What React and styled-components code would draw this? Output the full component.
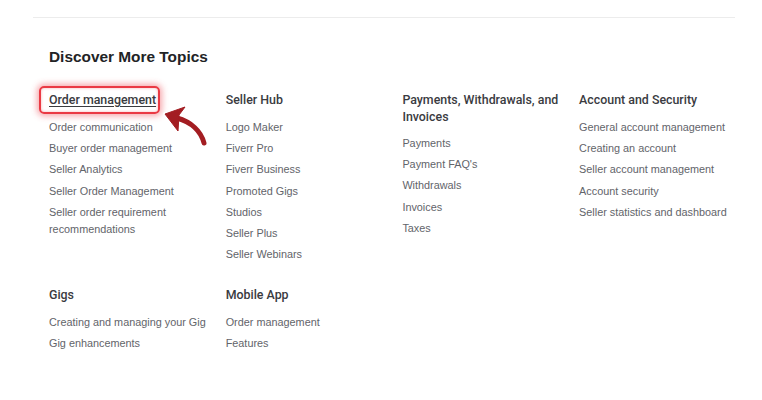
import React from "react";
import styled, { createGlobalStyle } from "styled-components";

const Global = createGlobalStyle`
  html, body { margin: 0; padding: 0; background: #fff; }
  body { font-family: "Liberation Sans", Arial, sans-serif; }
`;

const Page = styled.div`
  position: relative;
  width: 762px;
  height: 400px;
  padding: 17px 27px 0 33px;
  box-sizing: border-box;
`;

const Divider = styled.hr`
  margin: 0;
  border: 0;
  border-top: 1px solid #ececec;
`;

const Content = styled.div`
  padding-left: 16px;
`;

const Title = styled.h2`
  margin: 29px 0 0;
  font-size: 15.4px;
  line-height: 20px;
  font-weight: 700;
  color: #222325;
`;

const Grid = styled.div`
  display: grid;
  grid-template-columns: repeat(4, 176.7px);
  row-gap: 23px;
  margin-top: 23.5px;
  align-items: start;
`;

const Column = styled.div`
  display: flex;
  flex-direction: column;
  gap: ${(p) => (p.$tight ? "10.5px" : "11.5px")};
`;

const Heading = styled.div`
  font-family: Roboto, "Liberation Sans", sans-serif;
  font-size: 12.4px;
  line-height: 17px;
  font-weight: 500;
  color: #3a3b3f;
  width: ${(p) => (p.$wrap ? "165px" : "auto")};
`;

const HeadingText = styled.span`
  position: relative;
  display: inline-block;
  text-decoration: ${(p) => (p.$underline ? "underline" : "none")};
  text-decoration-thickness: 1px;
  text-underline-offset: 2px;
`;

const Highlight = styled.span`
  position: absolute;
  left: -10px;
  right: -4px;
  top: -4.5px;
  bottom: -6.5px;
  border: 2px solid #ea3a44;
  border-radius: 5px;
  box-shadow: 0 0 6px 2px rgba(234, 58, 68, 0.45), inset 0 0 3px rgba(234, 58, 68, 0.4);
  pointer-events: none;
`;

const LinkList = styled.ul`
  list-style: none;
  margin: 0;
  padding: 0;
  display: flex;
  flex-direction: column;
  gap: 4px;
`;

const LinkItem = styled.li`
  font-size: 10.85px;
  line-height: 17.2px;
  color: #62646a;
  width: ${(p) => (p.$narrow ? "130px" : "auto")};
`;

const ArrowSvg = styled.svg`
  position: absolute;
  left: 157px;
  top: 103px;
  width: 56px;
  height: 50px;
  overflow: visible;
`;

const sections = [
  {
    title: "Order management",
    highlight: true,
    links: [
      "Order communication",
      "Buyer order management",
      "Seller Analytics",
      "Seller Order Management",
      "Seller order requirement recommendations",
    ],
  },
  {
    title: "Seller Hub",
    links: [
      "Logo Maker",
      "Fiverr Pro",
      "Fiverr Business",
      "Promoted Gigs",
      "Studios",
      "Seller Plus",
      "Seller Webinars",
    ],
  },
  {
    title: "Payments, Withdrawals, and Invoices",
    wrap: true,
    tight: true,
    links: ["Payments", "Payment FAQ's", "Withdrawals", "Invoices", "Taxes"],
  },
  {
    title: "Account and Security",
    links: [
      "General account management",
      "Creating an account",
      "Seller account management",
      "Account security",
      "Seller statistics and dashboard",
    ],
  },
  {
    title: "Gigs",
    tight: true,
    links: ["Creating and managing your Gig", "Gig enhancements"],
  },
  {
    title: "Mobile App",
    tight: true,
    links: ["Order management", "Features"],
  },
];

export default function App() {
  return (
    <>
      <Global />
      <Page>
        <Divider />
        <Content>
          <Title>Discover More Topics</Title>
          <Grid>
            {sections.map((s) => (
              <Column key={s.title} $tight={s.tight}>
                <Heading $wrap={s.wrap}>
                  <HeadingText $underline={s.highlight}>
                    {s.highlight && <Highlight />}
                    {s.title}
                  </HeadingText>
                </Heading>
                <LinkList>
                  {s.links.map((l) => (
                    <LinkItem key={l} $narrow={l.length > 35}>
                      {l}
                    </LinkItem>
                  ))}
                </LinkList>
              </Column>
            ))}
          </Grid>
        </Content>
        <ArrowSvg viewBox="0 0 56 50">
          <g stroke="#ffffff" strokeLinejoin="round" fill="none" opacity="0.9">
            <path d="M47 40 C44 28 34 19 20 15" strokeWidth="9" strokeLinecap="round" />
            <path d="M8 11 L28 4 L22 12 L21 28 Z" strokeWidth="4" />
          </g>
          <path d="M47 40 C44 28 34 19 20 15" stroke="#a31d22" strokeWidth="5" fill="none" strokeLinecap="round" />
          <path d="M8 11 L28 4 L22 12 L21 28 Z" fill="#a31d22" stroke="#a31d22" strokeWidth="1" strokeLinejoin="round" />
        </ArrowSvg>
      </Page>
    </>
  );
}
